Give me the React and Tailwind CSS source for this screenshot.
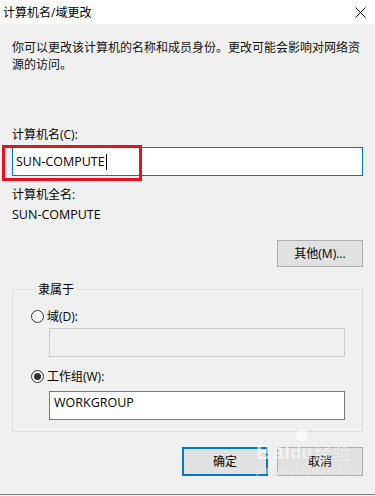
import React from 'react';

const font = { fontFamily: '"Open Sans", "Noto Sans CJK SC", sans-serif' };

function Radio({ checked }) {
  return (
    <span className="flex h-[13px] w-[13px] items-center justify-center rounded-full border border-[#333333] bg-white">
      {checked && <span className="h-[7px] w-[7px] rounded-full bg-[#333333]" />}
    </span>
  );
}

function Button({ children, primary }) {
  return (
    <div
      className={`flex h-[29px] w-[86px] items-center justify-center bg-[#e1e1e1] text-[12px] text-black ${
        primary ? 'border-2 border-[#0078d7]' : 'border border-[#adadad]'
      }`}
    >
      {children}
    </div>
  );
}

export default function App() {
  return (
    <div className="relative h-[496px] w-[375px] overflow-hidden bg-[#f0f0f0] text-[12px] leading-[17px] text-black" style={font}>
      {/* title bar */}
      <div className="flex h-[24px] items-center justify-between bg-white pl-[3px] pr-[10px]">
        <span>计算机名/域更改</span>
        <svg width="11" height="11" viewBox="0 0 11 11" className="mr-[-1px]">
          <path d="M0.5 0.5 L10.5 10.5 M10.5 0.5 L0.5 10.5" stroke="#111" strokeWidth="1" />
        </svg>
      </div>

      <div className="flex flex-col px-[12px] pt-[15px]">
        <p className="text-[#111]">你可以更改该计算机的名称和成员身份。更改可能会影响对网络资源的访问。</p>

        <div className="mt-[53px]">计算机名(C):</div>
        <div className="mt-[4px] flex h-[29px] items-center border border-[#0078d7] bg-white pl-[3px]">
          <span className="text-[12.5px]">SUN-COMPUTE</span>
          <span className="ml-[1px] h-[16px] w-px bg-black" />
        </div>

        <div className="mt-[10px]">计算机全名:</div>
        <div className="mt-[3px] text-[12.5px]">SUN-COMPUTE</div>

        <div className="mt-[17px] flex justify-end">
          <div className="flex h-[27px] w-[86px] items-center justify-center border border-[#adadad] bg-[#e1e1e1]">
            其他(M)...
          </div>
        </div>

        {/* group box */}
        <fieldset className="mt-[14px] h-[151px] border border-[#dcdcdc] px-[17px] pt-[10px]">
          <legend className="ml-[5px] px-[3px] leading-[17px]">隶属于</legend>
          <div className="flex items-center gap-[3px] pl-px">
            <Radio />
            <span>域(D):</span>
          </div>
          <div className="ml-[19px] mt-[3px] h-[29px] border border-[#cccccc] bg-[#f0f0f0]" />
          <div className="mt-[11px] flex items-center gap-[3px] pl-px">
            <Radio checked />
            <span>工作组(W):</span>
          </div>
          <div className="ml-[19px] mt-[6px] flex h-[29px] items-start border border-[#7a7a7a] bg-white pl-[4px] pt-[2px]">
            <span className="text-[12.5px]">WORKGROUP</span>
          </div>
        </fieldset>

        <div className="mt-[15px] flex justify-end gap-[9px]">
          <Button primary>确定</Button>
          <Button>取消</Button>
        </div>
      </div>

      <div className="absolute bottom-0 left-0 right-0 h-[2px] border-t border-[#7f7f7f] bg-[#f0f0f0]" />

      {/* red highlight annotation */}
      <div className="absolute left-[2px] top-[145px] h-[36px] w-[140px] border-[3px] border-[#e4131d]" />

      {/* baidu watermark */}
      <div className="pointer-events-none absolute left-[256px] top-[440px] flex flex-col items-start opacity-60">
        <div className="flex items-end">
          <span className="text-[22px] font-bold leading-[24px] text-white" style={{ fontFamily: '"Liberation Sans", sans-serif', textShadow: '0 0 1px #bbb' }}>
            Bai
          </span>
          <span className="relative text-[18px] font-bold leading-[22px] text-white" style={{ fontFamily: '"Liberation Sans", sans-serif', textShadow: '0 0 1px #bbb' }}>
            du
            <span className="absolute left-[6px] top-[-13px] h-[12px] w-[12px] rounded-full bg-white" />
          </span>
          <span className="ml-[2px] text-[18px] leading-[22px] text-white" style={{ textShadow: '0 0 1px #bbb' }}>经验</span>
        </div>
        <span className="text-[11px] leading-[12px] text-white" style={{ textShadow: '0 0 1px #bbb' }}>jingyan.baidu.com</span>
      </div>
    </div>
  );
}
